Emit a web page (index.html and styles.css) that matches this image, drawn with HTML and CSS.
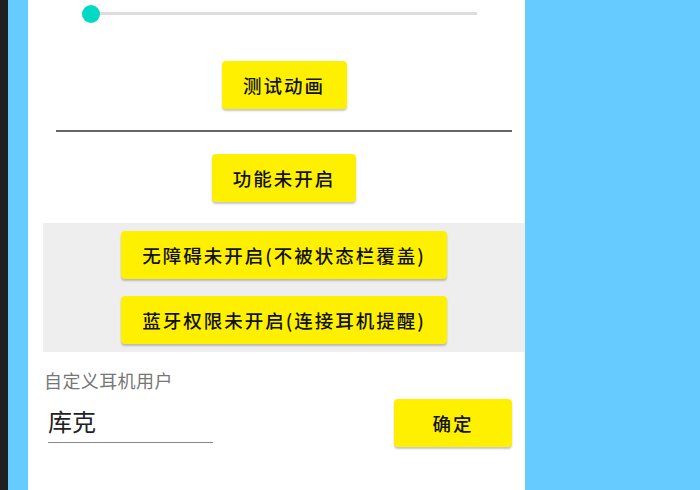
FILE: index.html
```html
<!DOCTYPE html>
<html lang="zh-CN">
<head>
<meta charset="utf-8">
<title>设置</title>
<link rel="stylesheet" href="styles.css">
</head>
<body>
<div class="screen">
  <div class="edge"></div>
  <div class="gutter"></div>
  <main class="panel">
    <div class="slider">
      <div class="track"></div>
      <div class="thumb"></div>
    </div>
    <div class="center">
      <button class="btn btn-test">测试动画</button>
    </div>
    <div class="divider"></div>
    <div class="center">
      <button class="btn btn-func">功能未开启</button>
    </div>
    <section class="perm">
      <button class="btn btn-wide">无障碍未开启(不被状态栏覆盖)</button>
      <button class="btn btn-wide">蓝牙权限未开启(连接耳机提醒)</button>
    </section>
    <div class="label">自定义耳机用户</div>
    <div class="input-row">
      <div class="input">库克</div>
      <button class="btn btn-ok">确定</button>
    </div>
  </main>
</div>
</body>
</html>
```

FILE: styles.css
```css
html, body {
  margin: 0;
  padding: 0;
}
body {
  background: #66ccff;
  font-family: "Noto Sans CJK SC", "Noto Sans", Roboto, sans-serif;
  width: 700px;
  height: 490px;
  overflow: hidden;
}
.screen {
  display: flex;
  height: 490px;
}
.edge {
  width: 8px;
  background: #1f1f1f;
}
.gutter {
  width: 20px;
  background: #66ccff;
}
.panel {
  width: 482px;
  padding-left: 15px;
  background: #ffffff;
  display: flex;
  flex-direction: column;
}
.slider {
  position: relative;
  height: 28px;
  margin-left: 39px;
  width: 395px;
}
.track {
  position: absolute;
  left: 9px;
  right: 0;
  top: 12px;
  height: 3px;
  background: #dddddd;
}
.thumb {
  position: absolute;
  left: 0;
  top: 5px;
  width: 18px;
  height: 18px;
  border-radius: 50%;
  background: #00d9c3;
}
.center {
  display: flex;
  justify-content: center;
}
.btn {
  font-family: "Noto Sans CJK SC", "Noto Sans", Roboto, sans-serif;
  font-size: 18.5px;
  font-weight: 500;
  letter-spacing: 2px;
  color: #111111;
  background: #fff000;
  border: none;
  border-radius: 4px;
  box-shadow: 0 2px 2px rgba(0, 0, 0, 0.22);
  height: 48px;
  padding: 0;
  display: flex;
  align-items: center;
  justify-content: center;
}
.btn-test {
  width: 125px;
  margin-top: 33px;
}
.divider {
  margin: 21px 13px 0;
  height: 2px;
  background: #666666;
}
.btn-func {
  width: 144px;
  margin-top: 22px;
}
.perm {
  margin-top: 21px;
  background: #eeeeee;
  padding: 8px 0;
  display: flex;
  flex-direction: column;
  align-items: center;
  gap: 17px;
}
.btn-wide {
  width: 326px;
}
.label {
  margin-top: 17px;
  margin-left: 1px;
  font-size: 18px;
  letter-spacing: 0.4px;
  line-height: 22px;
  color: #777777;
}
.input-row {
  display: flex;
  justify-content: space-between;
  align-items: flex-start;
}
.input {
  margin-top: 15px;
  margin-left: 5px;
  width: 165px;
  font-size: 24px;
  line-height: 30px;
  padding-bottom: 6px;
  color: #222222;
  border-bottom: 1.5px solid #888888;
}
.btn-ok {
  width: 118px;
  margin-top: 8px;
  margin-right: 13px;
}
```
